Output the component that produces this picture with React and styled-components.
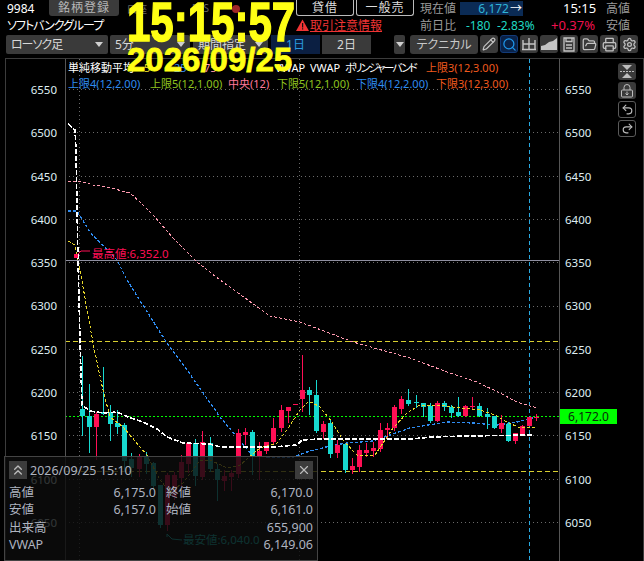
import React from 'react';
import styled, { createGlobalStyle } from 'styled-components';
import { Pencil, Search, FolderOpen, Printer, Settings, Undo2, Redo2, ChevronsUp, X } from 'lucide-react';

const FONT = '"Noto Sans", "Noto Sans CJK JP", sans-serif';

const Global = createGlobalStyle`
  html, body { margin: 0; padding: 0; background: #000; }
  body { width: 644px; height: 561px; overflow: hidden; font-family: ${FONT}; font-feature-settings: "palt"; }
`;

const Page = styled.div`
  position: relative;
  width: 644px;
  height: 561px;
  background: #000;
  overflow: hidden;
`;

const Header = styled.div`
  height: 58px;
  display: grid;
  grid-template-rows: 16px 18px 20px;
  font-size: 12px;
  color: #fff;
`;

const Row = styled.div`
  display: flex;
  align-items: center;
  white-space: nowrap;
`;

const Cell = styled.div`
  flex: none;
  width: ${(p) => p.$w}px;
  margin-left: ${(p) => p.$ml || 0}px;
  color: ${(p) => p.$color || '#fff'};
  text-align: ${(p) => p.$align || 'left'};
  font-size: ${(p) => p.$size || 12}px;
  letter-spacing: ${(p) => p.$ls || 0}px;
`;

const DarkButton = styled.div`
  flex: none;
  width: ${(p) => p.$w}px;
  height: 16px;
  margin-left: ${(p) => p.$ml || 0}px;
  background: #3b3b3b;
  color: #b5b5b5;
  border-radius: 0 0 3px 3px;
  font-size: 12px;
  letter-spacing: 1px;
  text-align: center;
  line-height: 15px;
`;

const OutlineButton = styled.div`
  flex: none;
  box-sizing: border-box;
  width: ${(p) => p.$w}px;
  height: 16px;
  margin-left: ${(p) => p.$ml || 0}px;
  border: 1px solid #bbb;
  border-top: 0;
  border-radius: 0 0 3px 3px;
  color: #ddd;
  font-size: 12px;
  text-align: center;
  line-height: 15px;
  letter-spacing: 1px;
`;

const PriceBox = styled.div`
  flex: none;
  width: 49px;
  height: 13px;
  background: #0b2b55;
  color: #2fb4d6;
  font-size: 12px;
  line-height: 13px;
  text-align: right;
`;

const ArrowBox = styled.div`
  flex: none;
  display: flex;
  align-items: center;
  justify-content: center;
  width: 14px;
  height: 15px;
  background: #0b2b55;
  color: #fff;
  font-size: 12px;
`;

const WarnLink = styled.div`
  flex: none;
  display: flex;
  align-items: center;
  gap: 1px;
  margin-left: 193px;
  width: 121px;
  color: #f03434;
  font-size: 12px;
  text-decoration: underline;
`;

const RedDot = styled.span`
  display: inline-block;
  width: 8px;
  height: 8px;
  border-radius: 50%;
  background: #a02828;
`;

const ToolRow = styled(Row)`
  padding-left: 6px;
  gap: 2px;
  height: 20px;
`;

const SelectBox = styled.div`
  flex: none;
  box-sizing: border-box;
  display: flex;
  align-items: center;
  justify-content: space-between;
  width: ${(p) => p.$w}px;
  height: 19px;
  margin-left: ${(p) => p.$ml || 0}px;
  padding: 0 5px;
  background: #3a3a3a;
  border-radius: 2px;
  color: #d8d8d8;
  font-size: 12px;
  letter-spacing: ${(p) => p.$ls || 0}px;
`;

const ArrowOnlyBox = styled(SelectBox)`
  padding: 0 2px;
`;

const Caret = styled.span`
  width: 0;
  height: 0;
  border-left: 4px solid transparent;
  border-right: 4px solid transparent;
  border-top: 5px solid #d0d0d0;
`;

const RangeTab = styled.div`
  flex: none;
  width: ${(p) => p.$w}px;
  height: 19px;
  margin-left: ${(p) => p.$ml || 0}px;
  background: ${(p) => (p.$active ? '#0b1f42' : '#3a3a3a')};
  color: ${(p) => (p.$active ? '#2a9be0' : '#d8d8d8')};
  font-size: 12px;
  line-height: 19px;
  text-align: center;
`;

const TechButton = styled.div`
  flex: none;
  width: 68px;
  height: 19px;
  margin-left: 3px;
  background: #3a3a3a;
  border-radius: 3px;
  color: #c8c8c8;
  font-size: 12px;
  line-height: 19px;
  text-align: center;
`;

const IconButton = styled.div`
  flex: none;
  box-sizing: border-box;
  display: flex;
  align-items: center;
  justify-content: center;
  width: 18px;
  height: 18px;
  background: ${(p) => (p.$active ? '#0a2248' : '#3a3a3a')};
  border: ${(p) => (p.$active ? '1px solid #123a78' : '0')};
  border-radius: 3px;
  color: ${(p) => (p.$active ? '#1e96ea' : '#c4c4c4')};
`;

const IconGap = styled.div`
  display: flex;
  gap: 2px;
`;

const Clock = styled.div`
  position: absolute;
  left: 127px;
  top: -10px;
  color: #ffff14;
  font-family: "Liberation Sans", sans-serif;
  font-weight: 700;
  font-size: 56px;
  line-height: 64px;
  -webkit-text-stroke: 1.4px #ffff14;
  transform: scaleX(0.75);
  transform-origin: left top;
  white-space: nowrap;
  z-index: 5;
`;

const DateStamp = styled.div`
  position: absolute;
  left: 127px;
  top: 41px;
  color: #ffff14;
  font-family: "Liberation Sans", sans-serif;
  font-weight: 700;
  font-size: 33px;
  line-height: 38px;
  -webkit-text-stroke: 0.8px #ffff14;
  white-space: nowrap;
  z-index: 5;
`;

const ChartBody = styled.div`
  position: relative;
  display: flex;
  height: 503px;
  box-sizing: border-box;
  margin-left: 5px;
  border-top: 1px solid #3c3c3c;
  border-left: 1px solid #3c3c3c;
  border-right: 1px solid #3c3c3c;
`;

const Axis = styled.div`
  flex: none;
  box-sizing: border-box;
  width: ${(p) => p.$w}px;
  padding-top: 9px;
  display: flex;
  flex-direction: column;
  color: #dfeef2;
  font-size: 11.5px;
  text-align: ${(p) => (p.$side === 'left' ? 'right' : 'left')};
  padding-right: ${(p) => (p.$side === 'left' ? 8 : 0)}px;
  padding-left: ${(p) => (p.$side === 'left' ? 0 : 5)}px;
`;

const AxisLabel = styled.div`
  height: 43.3px;
  line-height: 43.3px;
`;

const Plot = styled.svg`
  flex: none;
  display: block;
  width: 495px;
  height: 502px;
  box-sizing: border-box;
  border-left: 1px solid #555;
  border-right: 1px solid #555;
`;

const ChartText = styled.text`
  font-family: ${FONT};
  font-size: 11.5px;
`;

const Legend = styled.div`
  position: absolute;
  left: 62px;
  top: 1px;
  display: grid;
  white-space: nowrap;
`;

const LegendRow = styled.div`
  display: flex;
  height: 16px;
  line-height: 16px;
  font-size: 11px;
`;

const LegendItem = styled.span`
  flex: none;
  width: ${(p) => p.$w}px;
  color: ${(p) => p.$color || '#fff'};
  letter-spacing: ${(p) => p.$ls || 0}px;
`;

const PriceTag = styled.div`
  position: absolute;
  left: 554px;
  top: 350px;
  width: 57px;
  height: 15px;
  background: #00ff00;
  color: #0a2a0a;
  font-size: 12px;
  line-height: 15px;
  text-align: center;
`;

const SideTools = styled.div`
  position: absolute;
  left: 612px;
  top: 4px;
  display: grid;
  gap: 2px;
`;

const SideButton = styled.div`
  box-sizing: border-box;
  display: flex;
  align-items: center;
  justify-content: center;
  width: 18px;
  height: 17px;
  border-radius: 3px;
  color: #bdbdbd;
  background: ${(p) => (p.$outline ? 'transparent' : '#3a3a3a')};
  border: ${(p) => (p.$outline ? '1px solid #5a5a5a' : '0')};
`;

const InfoPanel = styled.div`
  position: absolute;
  left: 4px;
  top: 456px;
  box-sizing: border-box;
  width: 314px;
  height: 105px;
  padding: 4px 4px 0 4px;
  background: rgba(12, 12, 12, 0.82);
  border: 1px solid #444;
  color: #aeb4c0;
  font-size: 12.5px;
  z-index: 3;
`;

const PanelHead = styled.div`
  display: flex;
  align-items: center;
  height: 18px;
  margin-bottom: 5px;
`;

const PanelButton = styled.div`
  flex: none;
  display: flex;
  align-items: center;
  justify-content: center;
  width: 18px;
  height: 18px;
  background: #3c3c3c;
  color: #bbb;
`;

const PanelTitle = styled.div`
  flex: 1;
  padding-left: 3px;
`;

const PanelGrid = styled.div`
  display: grid;
  grid-template-columns: 40px 107px 40px 117px;
  grid-auto-rows: 17.3px;
  align-items: center;
  line-height: 17px;
`;

const PanelValue = styled.div`
  text-align: right;
  grid-column: ${(p) => (p.$wide ? '2 / 5' : 'auto')};
`;

const PanelLabel = styled.div`
  padding-left: ${(p) => (p.$second ? 10 : 0)}px;
  white-space: nowrap;
`;

const AXIS = [6550, 6500, 6450, 6400, 6350, 6300, 6250, 6200, 6150, 6100, 6050];
const yOf = (v) => Math.round(89 + ((6550 - v) / 50) * 43.3) + 0.5;

const UP = '#ff0f55';
const DOWN = '#17d9d0';

// traced from the picture: x, body top, body bottom, high, low (3x zoom units)
const LEFT = [
  [67, 207, 229, 48, 288, 0], [88, 229, 261, 132, 338, 0], [109, 222, 261, 215, 360, 1],
  [130, 217, 224, 80, 225, 0], [151, 215, 252, 195, 303, 0], [172, 249, 261, 210, 282, 0],
  [193, 255, 362, 250, 395, 0], [214, 357, 385, 340, 410, 0], [238, 350, 385, 342, 412, 1],
  [259, 350, 372, 337, 402, 0], [280, 370, 440, 365, 450, 0], [301, 435, 555, 435, 565, 0],
  [322, 405, 555, 400, 572, 1], [343, 405, 470, 395, 480, 1], [364, 365, 412, 345, 440, 1],
  [385, 310, 372, 305, 400, 1], [406, 310, 408, 297, 437, 0], [427, 306, 412, 273, 420, 1],
  [451, 310, 388, 290, 395, 0], [472, 388, 420, 372, 482, 0], [493, 408, 423, 390, 452, 1],
  [514, 400, 411, 390, 452, 1], [535, 279, 402, 267, 415, 1], [556, 276, 286, 263, 315, 1],
  [577, 276, 350, 270, 405, 0], [598, 334, 350, 305, 420, 1], [619, 306, 332, 305, 342, 1],
  [640, 264, 305, 233, 315, 1], [664, 210, 264, 195, 275, 1], [685, 201, 212, 201, 250, 1],
  [706, 191, 193, 191, 193, 1], [727, 150, 177, 45, 215, 1], [748, 150, 165, 140, 225, 0],
];

const RIGHT = [
  [49, 165, 273, 120, 278, 0], [70, 252, 276, 243, 298, 1], [91, 248, 342, 240, 353, 0],
  [112, 315, 340, 300, 353, 1], [136, 312, 390, 312, 398, 0], [157, 378, 390, 355, 402, 1],
  [178, 330, 381, 315, 395, 1], [199, 330, 340, 310, 350, 1], [220, 323, 332, 305, 350, 1],
  [241, 270, 328, 250, 335, 1], [262, 264, 270, 250, 300, 1], [283, 201, 264, 195, 272, 1],
  [304, 178, 207, 168, 222, 1], [325, 180, 192, 147, 198, 0], [349, 186, 190, 165, 205, 0],
  [370, 189, 201, 189, 231, 0], [391, 197, 243, 190, 250, 0], [412, 189, 243, 182, 245, 1],
  [433, 189, 201, 182, 213, 0], [454, 201, 219, 195, 233, 0], [475, 216, 228, 171, 230, 0],
  [496, 198, 228, 195, 230, 1], [517, 198, 202, 171, 208, 1], [538, 198, 228, 189, 230, 0],
  [562, 222, 231, 205, 268, 0], [583, 228, 264, 228, 268, 0], [604, 249, 267, 225, 278, 1],
  [625, 252, 303, 245, 306, 0], [646, 279, 303, 279, 312, 1], [667, 258, 282, 255, 285, 1],
  [688, 231, 258, 231, 258, 1], [709, 230, 232, 222, 243, 1],
];

const CANDLES = [
  ...LEFT.map(([x, t, b, h, l, u]) => ({ x: Math.round(60 + x / 3) + 0.5, t, b, h, l, u })),
  ...RIGHT.map(([x, t, b, h, l, u]) => ({ x: Math.round(300 + x / 3) + 0.5, t, b, h, l, u })),
];

const PINK_LINE = '68,181 80,181 93,185 107,187 130,193 140,202 153,215 173,238 197,262 220,280 270,316 300,322 353,342 410,358 447,372 477,382 500,393 517,402 537,408';
const BLUE_LINE = '68,211 77,211 90,232 117,260 127,280 165,340 187,370 220,417 237,437 252,455 267,457 293,457 307,452 330,446 347,443 373,441 410,428 447,422 473,423 497,425 517,422 533,418';
const YELLOW_LINE = '68,241 75,245 77,257 80,270 85,298 93,343 98,367 103,390 110,417 123,427 147,455 160,480 170,492 183,483 200,460 210,460 227,468 240,465 260,448 277,443 287,430 300,410 308,402 311,402 320,407 332,422 343,440 357,455 375,455 393,428 407,413 420,405 440,405 460,408 480,410 495,415 507,422 520,428 537,427';
const WHITE_LINE = '68,124 75,130 76,150 78,260 80,340 82,405 90,411 103,413 117,412 128,417 143,422 157,429 167,437 183,443 210,444 220,447 273,447 297,445 302,440 320,439 410,439 433,437 467,436 533,435';

function Candle({ x, t, b, h, l, u }) {
  const color = u ? UP : DOWN;
  const top = Math.round(340 + t / 3);
  const height = Math.max(Math.round((b - t) / 3), 1);
  return (
    <g shapeRendering="crispEdges">
      <line x1={x} x2={x} y1={340 + h / 3} y2={340 + l / 3} stroke={color} />
      <rect x={x - 2.5} y={top} width={5} height={height} fill={color} />
    </g>
  );
}

function ChartPlot() {
  return (
    <Plot viewBox="66 59 493 502">
      {AXIS.map((v) => (
        <line key={v} x1="65" x2="559" y1={yOf(v)} y2={yOf(v)} stroke="#6a6a6a" strokeDasharray="1 3" />
      ))}
      <line x1="79.5" x2="79.5" y1="59" y2="561" stroke="#6a6a6a" strokeDasharray="1 3" />
      <line x1="299.5" x2="299.5" y1="59" y2="561" stroke="#6a6a6a" strokeDasharray="1 3" />
      <line x1="65" x2="559" y1="260.5" y2="260.5" stroke="#8f8fa0" />
      <line x1="65" x2="559" y1="341.5" y2="341.5" stroke="#d8cf30" strokeDasharray="5 3" />
      <line x1="65" x2="559" y1="471.5" y2="471.5" stroke="#d8cf30" strokeDasharray="5 3" />
      <line x1="65" x2="559" y1="416.5" y2="416.5" stroke="#00ff00" strokeDasharray="2 2" />
      <line x1="529.5" x2="529.5" y1="59" y2="561" stroke="#29a9e0" strokeDasharray="4 3" />
      <polyline points={PINK_LINE} fill="none" stroke="#ff9ab0" strokeDasharray="3 2" shapeRendering="crispEdges" />
      <polyline points={BLUE_LINE} fill="none" stroke="#2f8cf0" strokeWidth="1.3" strokeDasharray="3 2" shapeRendering="crispEdges" />
      {CANDLES.map((c) => (
        <Candle key={c.x} {...c} />
      ))}
      <polyline points={YELLOW_LINE} fill="none" stroke="#e8d82a" strokeDasharray="3 2" shapeRendering="crispEdges" />
      <polyline points={WHITE_LINE} fill="none" stroke="#fff" strokeWidth="1.6" strokeDasharray="5 2" shapeRendering="crispEdges" />
      <rect x="74" y="254" width="4" height="4" fill={UP} />
      <polyline points="78,254 81,251 90,251" fill="none" stroke={UP} />
      <ChartText x="92" y="258" fill={UP}>最高値:6,352.0</ChartText>
      <polyline points="167,537 167,534 170,537 167,534 172,539 182,540" fill="none" stroke={DOWN} />
      <ChartText x="183" y="544" fill={DOWN}>最安値:6,040.0</ChartText>
    </Plot>
  );
}

function ChartLegend() {
  return (
    <Legend>
      <LegendRow>
        <LegendItem $w={76}>単純移動平均</LegendItem>
        <LegendItem $w={30} $color="#e8d82a">5</LegendItem>
        <LegendItem $w={30} $color="#2f8cf0">25</LegendItem>
        <LegendItem $w={71} $color="#ff9ab0">75</LegendItem>
        <LegendItem $w={35}>VWAP</LegendItem>
        <LegendItem $w={35}>VWAP</LegendItem>
        <LegendItem $w={81} $ls={-2}>ボリンジャーバンド</LegendItem>
        <LegendItem $w={80} $color="#f05a1e">上限3(12,3.00)</LegendItem>
      </LegendRow>
      <LegendRow>
        <LegendItem $w={82} $color="#2f8cf0">上限4(12,2.00)</LegendItem>
        <LegendItem $w={78} $color="#8fc31f">上限5(12,1.00)</LegendItem>
        <LegendItem $w={49} $color="#ff7a9a">中央(12)</LegendItem>
        <LegendItem $w={79} $color="#8fc31f">下限5(12,1.00)</LegendItem>
        <LegendItem $w={80} $color="#2f8cf0">下限4(12,2.00)</LegendItem>
        <LegendItem $w={80} $color="#f05a1e">下限3(12,3.00)</LegendItem>
      </LegendRow>
    </Legend>
  );
}

function WarnIcon() {
  return (
    <svg width="13" height="12" viewBox="0 0 13 12">
      <path d="M6.5 0.5L13 12H0z" fill="#f03434" />
      <path d="M6 4h1.2v4.4H6zM6 9.2h1.2v1.3H6z" fill="#111" />
    </svg>
  );
}

function CandleIcon() {
  return (
    <svg width="16" height="14" viewBox="0 0 16 14" fill="none" stroke="currentColor" strokeWidth="1.4">
      <path d="M2 3v9M8 1v11M14 3v9M2 7h12M1 12.5h14" />
    </svg>
  );
}

function AreaIcon() {
  return (
    <svg width="16" height="12" viewBox="0 0 16 12" fill="currentColor">
      <path d="M0 12V8l4-1 4-3 4-1 4-3v12z" />
    </svg>
  );
}

function DocIcon() {
  return (
    <svg width="12" height="15" viewBox="0 0 12 15" fill="none" stroke="currentColor" strokeWidth="1.3">
      <path d="M1 1h10v13H1zM3 1v3.5h6V1M3 8h6M3 11h6" />
    </svg>
  );
}

function CollapseIcon() {
  return (
    <svg width="14" height="13" viewBox="0 0 14 13" fill="currentColor">
      <path d="M2 0h10L7 5z" />
      <path d="M0 6h2v1H0zM3 6h2v1H3zM6 6h2v1H6zM9 6h2v1H9zM12 6h2v1h-2z" />
      <path d="M7 8l5 5H2z" />
    </svg>
  );
}

function LockIcon() {
  return (
    <svg width="14" height="14" viewBox="0 0 14 14" fill="none" stroke="currentColor">
      <path d="M4 6V3.5a3 3 0 0 1 6 0V6" />
      <rect x="1.5" y="6" width="11" height="7" rx="1" />
      <path d="M7 7.5v3M5.5 9.5L7 11l1.5-1.5" />
    </svg>
  );
}

export default function App() {
  return (
    <Page>
      <Global />
      <Header>
        <Row>
          <Cell $w={42} $ml={7}>9984</Cell>
          <DarkButton $w={70}>銘柄登録</DarkButton>
          <Cell $w={65} $ml={8} $size={10} $color="#666">口座</Cell>
          <Cell $w={40} $size={10} $color="#666">PTS</Cell>
          <Cell $w={64}><RedDot /></Cell>
          <OutlineButton $w={58}>貸借</OutlineButton>
          <OutlineButton $w={58} $ml={2}>一般売</OutlineButton>
          <Cell $w={40} $ml={6} $color="#9a9a9a">現在値</Cell>
          <PriceBox>6,172</PriceBox>
          <ArrowBox>→</ArrowBox>
          <Cell $w={34} $ml={40} $size={13}>15:15</Cell>
          <Cell $w={30} $ml={9} $color="#9a9a9a">高値</Cell>
        </Row>
        <Row>
          <Cell $w={96} $ml={7} $ls={-1}>ソフトバンクグループ</Cell>
          <WarnLink>
            <WarnIcon />
            取引注意情報
          </WarnLink>
          <Cell $w={46} $ml={3} $color="#9a9a9a">前日比</Cell>
          <Cell $w={31} $color="#1fd8c4">-180</Cell>
          <Cell $w={54} $color="#1fd8c4">-2.83%</Cell>
          <Cell $w={55} $size={13} $color="#f0104f">+0.37%</Cell>
          <Cell $w={30} $color="#9a9a9a">安値</Cell>
        </Row>
        <ToolRow>
          <SelectBox $w={102} $ls={-1}>ローソク足<Caret /></SelectBox>
          <SelectBox $w={80}>5分<Caret /></SelectBox>
          <SelectBox $w={75} $ml={1}>期間指定<Caret /></SelectBox>
          <RangeTab $w={49} $ml={1} $active>1日</RangeTab>
          <RangeTab $w={49}>2日</RangeTab>
          <ArrowOnlyBox $w={11} $ml={21}><Caret /></ArrowOnlyBox>
          <TechButton>テクニカル</TechButton>
          <IconGap>
            <IconButton><Pencil size={14} /></IconButton>
            <IconButton $active><Search size={15} /></IconButton>
            <IconButton><CandleIcon /></IconButton>
            <IconButton><AreaIcon /></IconButton>
            <IconButton><DocIcon /></IconButton>
            <IconButton><FolderOpen size={15} /></IconButton>
            <IconButton><Printer size={15} /></IconButton>
            <IconButton><Settings size={15} /></IconButton>
          </IconGap>
        </ToolRow>
      </Header>
      <Clock>15:15:57</Clock>
      <DateStamp>2026/09/25</DateStamp>
      <ChartBody>
        <Axis $w={59} $side="left">
          {AXIS.map((v) => <AxisLabel key={v}>{v}</AxisLabel>)}
        </Axis>
        <ChartPlot />
        <Axis $w={83} $side="right">
          {AXIS.map((v) => <AxisLabel key={v}>{v}</AxisLabel>)}
        </Axis>
        <ChartLegend />
        <PriceTag>6,172.0</PriceTag>
        <SideTools>
          <SideButton><CollapseIcon /></SideButton>
          <SideButton><LockIcon /></SideButton>
          <SideButton $outline><Undo2 size={13} /></SideButton>
          <SideButton $outline><Redo2 size={13} /></SideButton>
        </SideTools>
      </ChartBody>
      <InfoPanel>
        <PanelHead>
          <PanelButton><ChevronsUp size={16} /></PanelButton>
          <PanelTitle>2026/09/25 15:10</PanelTitle>
          <PanelButton><X size={14} /></PanelButton>
        </PanelHead>
        <PanelGrid>
          <PanelLabel>高値</PanelLabel>
          <PanelValue>6,175.0</PanelValue>
          <PanelLabel $second>終値</PanelLabel>
          <PanelValue>6,170.0</PanelValue>
          <PanelLabel>安値</PanelLabel>
          <PanelValue>6,157.0</PanelValue>
          <PanelLabel $second>始値</PanelLabel>
          <PanelValue>6,161.0</PanelValue>
          <PanelLabel>出来高</PanelLabel>
          <PanelValue $wide>655,900</PanelValue>
          <PanelLabel>VWAP</PanelLabel>
          <PanelValue $wide>6,149.06</PanelValue>
        </PanelGrid>
      </InfoPanel>
    </Page>
  );
}
